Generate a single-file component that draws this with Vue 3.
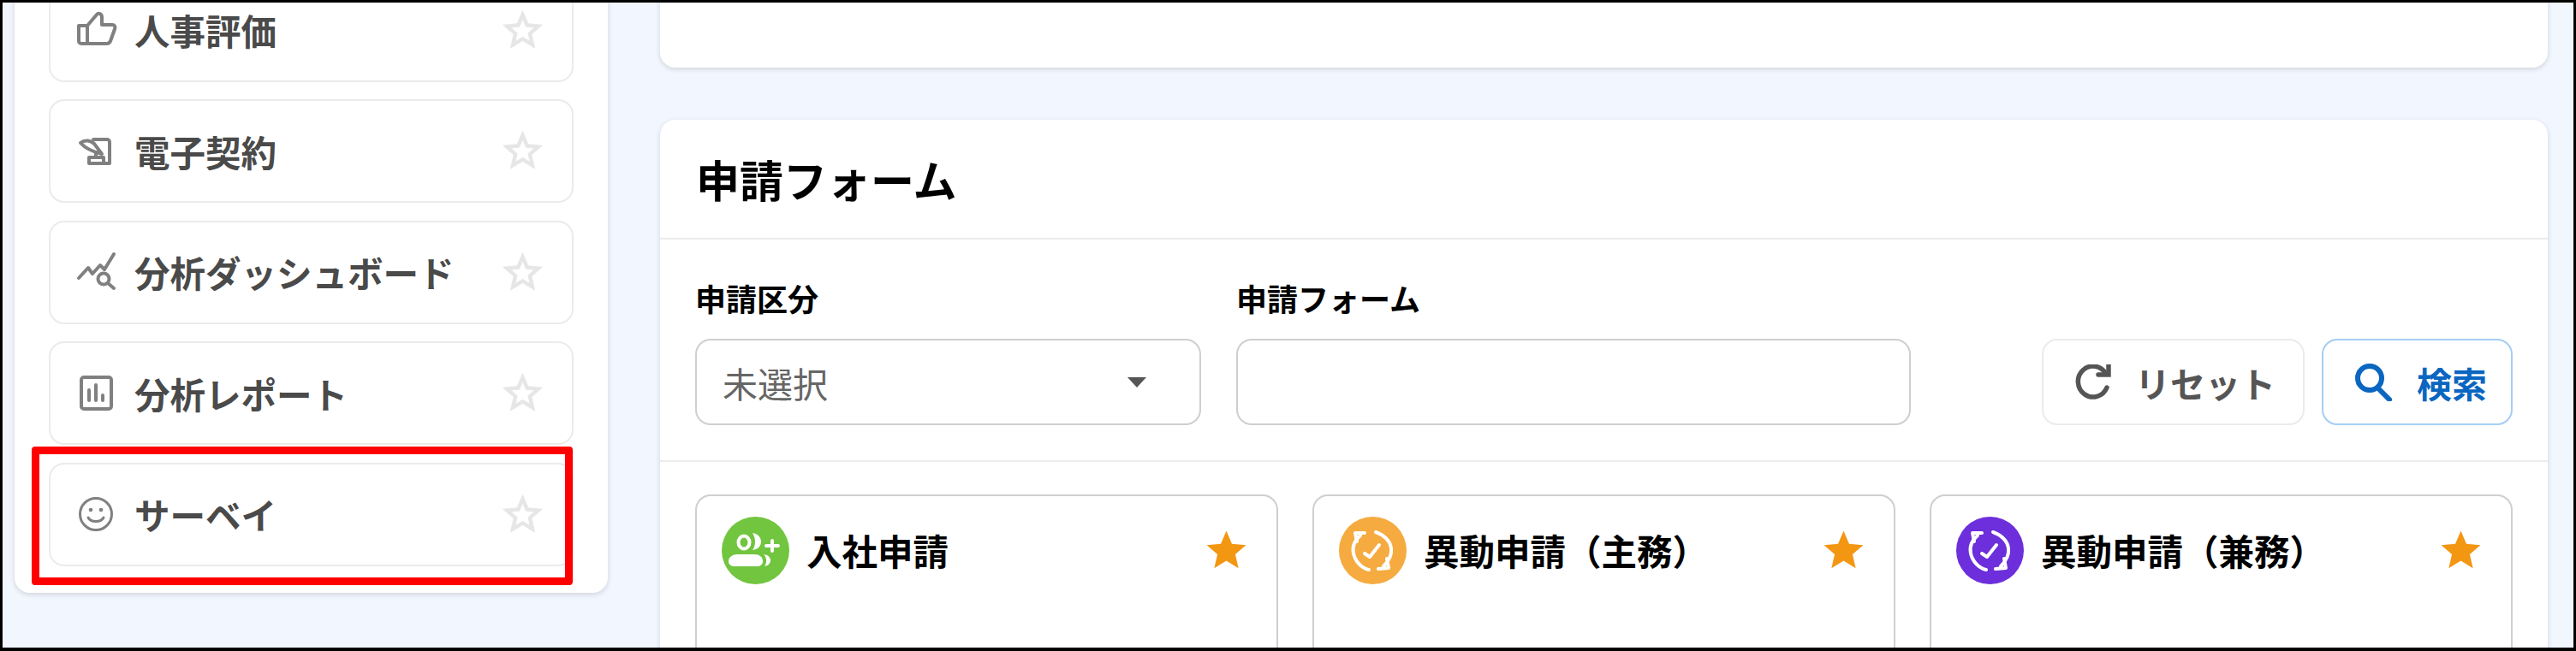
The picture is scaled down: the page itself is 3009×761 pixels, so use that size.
<template>
  <div class="page">
    <aside class="sidebar">
      <div v-for="item in navItems" :key="item.label" class="navItem">
        <svg class="navIcon" viewBox="0 0 48 48" width="48" height="48">
          <g v-if="item.icon === 'thumb'">
            <path d="M3 19H13V40H6A3 3 0 0 1 3 37Z" />
            <path d="M13 19L24 6C26 3.500 30 5 30 9V18H42C45 18 46 20 45 23L40 37C39 39 38 40 36 40H13" />
          </g>
          <g v-if="item.icon === 'contract'">
            <path d="M20 10H36A3 3 0 0 1 39 13V38H17" />
            <path d="M5 14C10 10 17 11 21 15L30 27C22 25 12 22 5 14Z" />
            <path d="M23 25V31M15 31H32V38H15Z" />
          </g>
          <g v-if="item.icon === 'analysis'">
            <path d="M3 31L14 19L19 26L28 16L33 21L44 3" />
            <circle cx="32" cy="32" r="6.500" />
            <path d="M37 37L44 43" />
          </g>
          <g v-if="item.icon === 'report'">
            <rect x="6" y="5" width="35" height="37" rx="3" />
            <path d="M15 20V32M23 14V32M31 26V32" />
          </g>
          <g v-if="item.icon === 'smile'">
            <circle cx="23" cy="24" r="18.500" stroke-width="3" />
            <circle class="dot" cx="17" cy="19" r="2.300" />
            <circle class="dot" cx="29" cy="19" r="2.300" />
            <path d="M14 28C17 34 29 34 32 28" stroke-width="3" />
          </g>
        </svg>
        <span class="navLabel">{{ item.label }}</span>
        <svg class="navStar" viewBox="0 0 24 24" width="55" height="55">
          <path d="M22 9.240l-7.190-.62L12 2 9.190 8.630 2 9.240l5.460 4.730L5.820 21 12 17.270 18.180 21l-1.630-7.030L22 9.240zM12 15.400l-3.760 2.270 1-4.280-3.320-2.880 4.380-.38L12 6.100l1.710 4.040 4.380.38-3.320 2.880 1 4.280L12 15.400z" />
        </svg>
        <div v-if="item.marked" class="redBox"></div>
      </div>
    </aside>

    <main class="main">
      <section class="panel topPanel"></section>

      <section class="panel formPanel">
        <h2 class="formTitle">申請フォーム</h2>

        <div class="filters">
          <div class="field fieldSelect">
            <label>申請区分</label>
            <div class="control selectBox">
              <span>未選択</span>
              <i class="arrow"></i>
            </div>
          </div>
          <div class="field fieldInput">
            <label>申請フォーム</label>
            <div class="control"></div>
          </div>
          <div class="buttons">
            <button class="btn btnReset">
              <svg viewBox="0 0 44 42" width="44" height="42">
                <path d="M38 11A17.500 18 0 1 0 39 27" />
                <path d="M41 0V12H29" />
              </svg>
              リセット
            </button>
            <button class="btn btnSearch">
              <svg viewBox="0 0 44 44" width="44" height="44">
                <circle cx="18" cy="17" r="14" />
                <path d="M27 28L41 42" />
              </svg>
              検索
            </button>
          </div>
        </div>

        <div class="cards">
          <div v-for="card in cards" :key="card.title" class="card">
            <svg class="cardIcon" viewBox="0 0 79 79" width="79" height="79">
              <circle cx="39.500" cy="39.500" r="39.500" :fill="card.color" />
              <g v-if="card.icon === 'join'">
                <ellipse class="line" cx="26" cy="30" rx="6.500" ry="7.500" stroke-width="4.500" />
                <path class="solid" d="M36 19C43 20 46 25 46 29C46 34 43 38 36 39C40 34 40 25 36 19Z" />
                <path class="solid" d="M8 52C8 47 13 44 18 44H38C44 44 48 47 48 52C48 56 45 58 41 58H15C11 58 8 56 8 52Z" />
                <path class="solid" d="M49 44C55 45 57 48 57 51C57 54 55 57 50 58C53 54 53 48 49 44Z" />
                <path class="line" d="M59 28V40M52 34H66" stroke-width="3.500" />
              </g>
              <g v-else class="line">
                <path d="M25 22C18 28 15.500 36 17 43C19 52 26 60 35 62" />
                <path d="M30 19L19 19L21 29" />
                <path d="M43 18C52 21 60 28 61 37C62 45 58 52 52 58" />
                <path d="M46 61L58 60L56 49" />
                <path d="M30 43L36 47L47 33" />
              </g>
            </svg>
            <span class="cardTitle">{{ card.title }}</span>
            <svg class="cardStar" viewBox="0 0 24 24" width="55" height="55">
              <path d="M12 17.270L18.180 21l-1.640-7.030L22 9.240l-7.190-.61L12 2 9.190 8.630 2 9.240l5.460 4.730L5.820 21z" />
            </svg>
          </div>
        </div>
      </section>
    </main>
  </div>
</template>

<script setup>
const navItems = [
  { label: '人事評価', icon: 'thumb' },
  { label: '電子契約', icon: 'contract' },
  { label: '分析ダッシュボード', icon: 'analysis' },
  { label: '分析レポート', icon: 'report' },
  { label: 'サーベイ', icon: 'smile', marked: true }
]

const cards = [
  { title: '入社申請', icon: 'join', color: '#72c53f' },
  { title: '異動申請（主務）', icon: 'sync', color: '#f5ab40' },
  { title: '異動申請（兼務）', icon: 'sync', color: '#6d2edb' }
]
</script>

<style>
body {
  margin: 0;
}
</style>

<style scoped>
.page {
  box-sizing: border-box;
  width: 3009px;
  height: 761px;
  border: 3px solid #000;
  border-bottom-width: 4px;
  background-color: #f2f6fe;
  display: flex;
  align-items: flex-start;
  overflow: hidden;
  font-family: "Noto Sans CJK JP", "Liberation Sans", sans-serif;
}

/* サイドバー */
.sidebar {
  box-sizing: border-box;
  flex: none;
  width: 693px;
  margin: -44px 0 0 14px;
  padding: 15.500px 40px 31px;
  display: flex;
  flex-direction: column;
  gap: 20.500px;
  background-color: #fff;
  border-radius: 0 0 18px 18px;
  box-shadow: 0 2px 6px rgba(0, 0, 0, 0.14);
}

.navItem {
  box-sizing: border-box;
  position: relative;
  height: 121px;
  padding: 0 30px;
  display: flex;
  align-items: center;
  gap: 20px;
  border: 2px solid #ebebeb;
  border-radius: 18px;
}

.navIcon {
  flex: none;
  fill: none;
  stroke: #808080;
  stroke-width: 4;
  stroke-linejoin: round;
  stroke-linecap: round;
}

.navIcon .dot {
  fill: #808080;
  stroke: none;
}

.navLabel {
  font-size: 41.500px;
  font-weight: 700;
  color: #4a4a4a;
  white-space: nowrap;
}

.navStar {
  flex: none;
  margin-left: auto;
  fill: #e6e6e6;
  stroke: #e6e6e6;
  stroke-width: 0.350;
}

.redBox {
  position: absolute;
  top: -21px;
  left: -22px;
  right: -1px;
  bottom: -24px;
  border: 9px solid #f00;
  border-radius: 4px;
}

/* メイン */
.main {
  flex: none;
  width: 2205px;
  margin: -43px 0 0 61px;
  display: flex;
  flex-direction: column;
  gap: 61px;
}

.panel {
  background-color: #fff;
  border-radius: 18px;
  box-shadow: 0 2px 6px rgba(0, 0, 0, 0.14);
}

.topPanel {
  height: 119px;
}

.formPanel {
  height: 800px;
}

.formTitle {
  box-sizing: border-box;
  height: 140px;
  margin: 0;
  padding-left: 42px;
  display: flex;
  align-items: center;
  border-bottom: 2px solid #ececec;
  font-size: 51px;
  font-weight: 700;
  color: #000;
}

.filters {
  box-sizing: border-box;
  padding: 44px 41px 41px;
  display: flex;
  align-items: flex-end;
  gap: 41px;
  border-bottom: 2px solid #ececec;
}

.field label {
  display: block;
  height: 48px;
  margin-bottom: 24px;
  font-size: 36px;
  line-height: 48px;
  font-weight: 700;
  color: #000;
}

.fieldSelect {
  width: 591px;
}

.fieldInput {
  width: 788px;
}

.control {
  box-sizing: border-box;
  height: 101px;
  border: 2px solid #cfcfcf;
  border-radius: 18px;
}

.selectBox {
  padding: 0 62px 0 30px;
  display: flex;
  align-items: center;
  justify-content: space-between;
  font-size: 41px;
  color: #666;
}

.arrow {
  width: 0;
  height: 0;
  border-left: 11.500px solid transparent;
  border-right: 11.500px solid transparent;
  border-top: 12px solid #555;
}

.buttons {
  margin-left: auto;
  display: flex;
  gap: 20px;
}

.btn {
  box-sizing: border-box;
  height: 101px;
  display: flex;
  align-items: center;
  justify-content: center;
  background-color: #fff;
  border-radius: 18px;
  font-family: inherit;
  font-size: 41px;
  font-weight: 700;
}

.btn svg {
  flex: none;
  fill: none;
  stroke-linecap: round;
}

.btnReset {
  width: 307px;
  padding: 0 0 0 3px;
  gap: 28px;
  border: 2px solid #ebebeb;
  color: #555;
}

.btnReset svg {
  stroke: #555;
  stroke-width: 5.500;
}

.btnSearch {
  width: 223px;
  padding: 0 0 0 8px;
  gap: 29px;
  border: 2px solid #a5cdf5;
  color: #0a66c0;
}

.btnSearch svg {
  stroke: #0a66c0;
  stroke-width: 6;
}

/* カード */
.cards {
  padding: 38px 41px 0;
  display: grid;
  grid-template-columns: repeat(3, 1fr);
  gap: 40px;
}

.card {
  box-sizing: border-box;
  height: 300px;
  padding: 24px 29px;
  display: flex;
  align-items: flex-start;
  gap: 20px;
  border: 2px solid #cfcfcf;
  border-radius: 18px;
}

.cardIcon {
  flex: none;
}

.cardIcon .solid {
  fill: #fff;
}

.cardIcon .line {
  fill: none;
  stroke: #fff;
  stroke-width: 4;
  stroke-linecap: round;
  stroke-linejoin: round;
}

.cardTitle {
  height: 79px;
  font-size: 41.500px;
  line-height: 79px;
  font-weight: 700;
  color: #000;
  white-space: nowrap;
}

.cardStar {
  flex: none;
  margin: 12px 2px 0 auto;
  fill: #f39612;
}
</style>
